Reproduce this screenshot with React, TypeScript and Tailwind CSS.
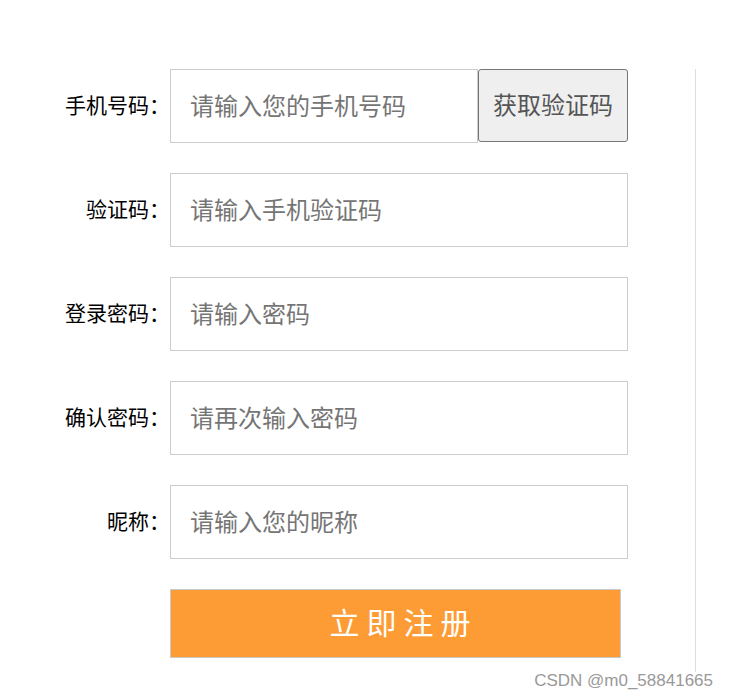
import React from 'react'

const font = { fontFamily: '"Noto Sans CJK SC", "Microsoft YaHei", sans-serif' }

const rows = [
  { label: '验证码：', ph: '请输入手机验证码' },
  { label: '登录密码：', ph: '请输入密码' },
  { label: '确认密码：', ph: '请再次输入密码' },
  { label: '昵称：', ph: '请输入您的昵称' },
]

const inputCls =
  'h-[74px] border border-[#cccccc] bg-white pl-[19px] pb-[4px] text-[24px] text-[#333] outline-none placeholder:text-[#757575]'

const labelCls = 'mb-[4px] w-[170px] text-right text-[21px] leading-none text-black'

export default function App() {
  return (
    <div className="relative h-[698px] w-[729px] overflow-hidden bg-white" style={font}>
      <div className="flex pt-[69px]">
        <div className="flex w-[695px] flex-col gap-[30px]">
          <div className="flex items-center">
            <label className={labelCls}>手机号码：</label>
            <input className={`${inputCls} w-[308px]`} placeholder="请输入您的手机号码" style={font} />
            <button
              className="h-[73px] w-[150px] self-start rounded-[3px] border border-[#767676] bg-[#efefef] pb-[4px] text-[24px] text-[#555]"
              style={font}
            >
              获取验证码
            </button>
          </div>
          {rows.map(r => (
            <div key={r.label} className="flex items-center">
              <label className={labelCls}>{r.label}</label>
              <input className={`${inputCls} w-[458px]`} placeholder={r.ph} style={font} />
            </div>
          ))}
          <div className="flex">
            <div className="w-[170px]" />
            <button
              className="h-[69px] w-[451px] border border-[#c9c9c9] bg-[#fd9b35] pl-[16px] pb-[5px] text-[30px] tracking-[7px] text-white"
              style={font}
            >
              立即注册
            </button>
          </div>
        </div>
        <div className="h-[603px] w-px bg-[#dddddd]" />
      </div>
      <div
        className="absolute right-[16px] top-[668px] text-[17px] text-[#999]"
        style={{ fontFamily: '"Liberation Sans", Arial, sans-serif', textShadow: '0 0 1px #fff' }}
      >
        CSDN @m0_58841665
      </div>
    </div>
  )
}
